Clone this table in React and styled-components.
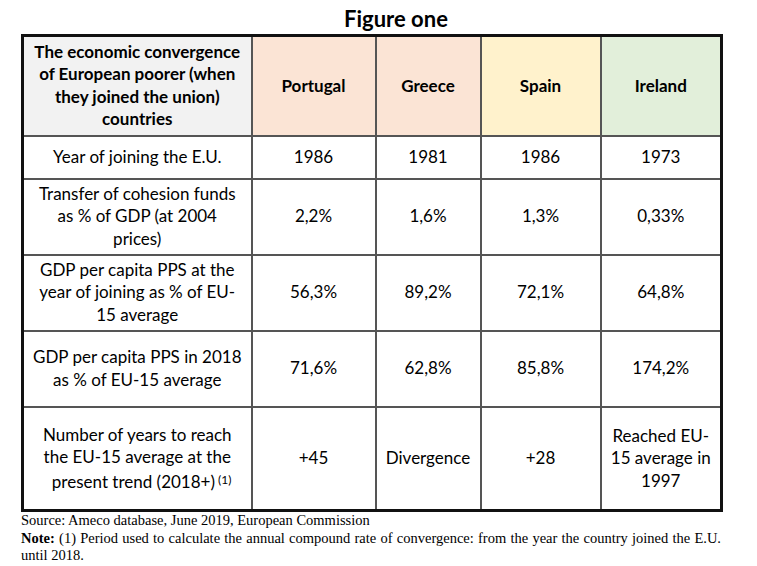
import React from "react"
import styled, { createGlobalStyle } from "styled-components"

const rows = [
    { label: ["Year of joining the E.U."], values: ["1986", "1981", "1986", "1973"], height: 43 },
    { label: ["Transfer of cohesion funds", "as % of GDP (at 2004", "prices)"], values: ["2,2%", "1,6%", "1,3%", "0,33%"], height: 76 },
    { label: ["GDP per capita PPS at the", "year of joining as % of EU-", "15 average"], values: ["56,3%", "89,2%", "72,1%", "64,8%"], height: 76 },
    { label: ["GDP per capita PPS in 2018", "as % of EU-15 average"], values: ["71,6%", "62,8%", "85,8%", "174,2%"], height: 76 },
]

const countries = [
    { name: "Portugal", bg: "#fbe4d5" },
    { name: "Greece", bg: "#fbe4d5" },
    { name: "Spain", bg: "#fff2cc" },
    { name: "Ireland", bg: "#e2efda" },
]

const lines = (arr) =>
    arr.map((l, i) => (
        <React.Fragment key={i}>
            {i > 0 && <br />}
            {l}
        </React.Fragment>
    ))

class App extends React.Component {
    render() {
        return (
            <Page>
                <GlobalStyle />
                <Title>Figure one</Title>
                <Table>
                    <colgroup>
                        <col style={{ width: 229 }} />
                        <col style={{ width: 124 }} />
                        <col style={{ width: 105 }} />
                        <col style={{ width: 120 }} />
                        <col style={{ width: 121 }} />
                    </colgroup>
                    <tbody>
                        <Row height={100}>
                            <HeadCell bg="#f2f2f2">
                                {lines([
                                    "The economic convergence",
                                    "of European poorer (when",
                                    "they joined the union)",
                                    "countries",
                                ])}
                            </HeadCell>
                            {countries.map((c) => (
                                <HeadCell key={c.name} bg={c.bg}>{c.name}</HeadCell>
                            ))}
                        </Row>
                        {rows.map((r, i) => (
                            <Row key={i} height={r.height}>
                                <Cell>{lines(r.label)}</Cell>
                                {r.values.map((v, j) => (
                                    <Cell key={j}>{v}</Cell>
                                ))}
                            </Row>
                        ))}
                        <Row height={104}>
                            <Cell>
                                Number of years to reach<br />
                                the EU-15 average at the<br />
                                &nbsp;&nbsp;present trend (2018+)<Sup>(1)</Sup>
                            </Cell>
                            <Cell>+45</Cell>
                            <Cell>Divergence</Cell>
                            <Cell>+28</Cell>
                            <Cell>
                                Reached EU-<br />
                                15 average in<br />
                                1997
                            </Cell>
                        </Row>
                    </tbody>
                </Table>
                <Notes>
                    <NoteLine>Source: Ameco database, June 2019, European Commission</NoteLine>
                    <NoteLine justify>
                        <b>Note:</b> (1) Period used to calculate the annual compound rate of convergence: from the year the country joined the E.U.
                    </NoteLine>
                    <NoteLine>until 2018.</NoteLine>
                </Notes>
            </Page>
        )
    }
}

const GlobalStyle = createGlobalStyle`
    body {
        margin: 0;
        background: white;
    }
`
const Page = styled.div`
    width: 700px;
    padding: 7px 0 0 21px;
    font-family: Lato, "Open Sans", sans-serif;
    color: #000;
`
const Title = styled.div`
    text-align: center;
    padding-left: 50px;
    font-weight: bold;
    font-size: 22px;
    line-height: 24px;
    height: 27px;
`
const Table = styled.table`
    table-layout: fixed;
    border-collapse: collapse;
    width: 700px;
    border: 3px solid #111;
`
const Row = styled.tr`
    height: ${(p) => p.height}px;
`
const Cell = styled.td`
    border: 2px solid #555;
    padding: 0 2px;
    text-align: center;
    vertical-align: middle;
    white-space: nowrap;
    font-size: 17px;
    line-height: 22.5px;
`
const HeadCell = styled(Cell)`
    background: ${(p) => p.bg};
    font-weight: bold;
`
const Sup = styled.span`
    font-size: 12px;
    vertical-align: 4px;
    margin-left: 3px;
`
const Notes = styled.div`
    font-family: "Liberation Serif", "Times New Roman", serif;
    font-size: 14.5px;
    line-height: 17.5px;
`
const NoteLine = styled.div`
    text-align: ${(p) => (p.justify ? "justify" : "left")};
    text-align-last: ${(p) => (p.justify ? "justify" : "auto")};
`

export default App
